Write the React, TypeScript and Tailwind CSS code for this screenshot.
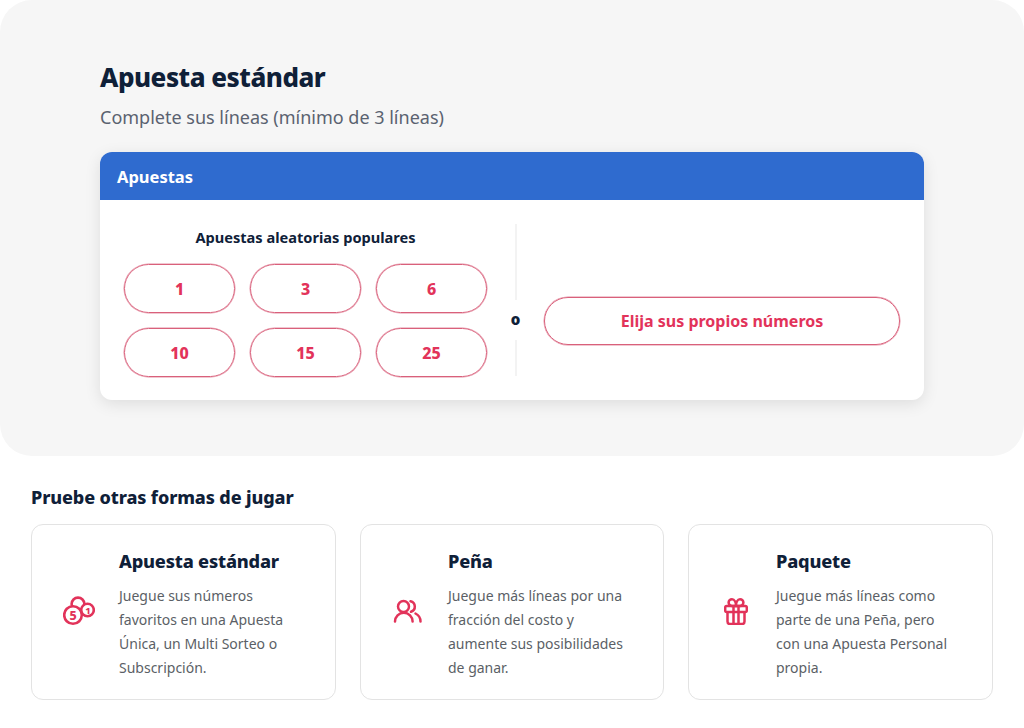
const font = { fontFamily: '"Noto Sans", sans-serif' };

function BallsIcon() {
  return (
    <svg width="32" height="32" viewBox="0 0 32 32" fill="none" stroke="#e2335a" strokeWidth="2.6">
      <circle cx="15" cy="9" r="6.4" />
      <circle cx="24.5" cy="15" r="6.3" fill="#fff" />
      <circle cx="10" cy="20" r="8.8" fill="#fff" />
      <text x="10" y="24.5" fontSize="12.5" fontWeight="800" textAnchor="middle" fill="#e2335a" stroke="none">5</text>
      <text x="25" y="18.5" fontSize="9.5" fontWeight="800" textAnchor="middle" fill="#e2335a" stroke="none">1</text>
    </svg>
  );
}

function UsersIcon() {
  return (
    <svg width="30" height="24" viewBox="0 0 30 24" fill="none" stroke="#e2335a" strokeWidth="2.5" strokeLinecap="round">
      <circle cx="10.5" cy="7.5" r="5.5" />
      <path d="M2 22.5a8.8 8.8 0 0 1 17.6 0" />
      <path d="M17.5 2.2a5.5 5.5 0 0 1 .5 10.6" />
      <path d="M22.5 14.5c3 1.5 5 4.5 5 8" />
    </svg>
  );
}

function GiftIcon() {
  return (
    <svg width="24" height="28" viewBox="0 0 24 28" fill="none" stroke="#e2335a" strokeWidth="2.5" strokeLinejoin="round">
      <rect x="1.2" y="9" width="21.6" height="6" rx="1.5" />
      <path d="M3.5 15v9.5A2.5 2.5 0 0 0 6 27h12a2.5 2.5 0 0 0 2.5-2.5V15" />
      <path d="M9.5 9v18M14.5 9v18" />
      <path d="M12 9H8a3.4 3.4 0 1 1 0-6.8C10.5 2.2 12 5.5 12 9Z" />
      <path d="M12 9h4a3.4 3.4 0 1 0 0-6.8C13.5 2.2 12 5.5 12 9Z" />
    </svg>
  );
}

const picks = ["1", "3", "6", "10", "15", "25"];

const ways = [
  {
    title: "Apuesta estándar",
    text: ["Juegue sus números", "favoritos en una Apuesta", "Única, un Multi Sorteo o", "Subscripción."],
    icon: <BallsIcon />,
    width: "w-[305px]",
  },
  {
    title: "Peña",
    text: ["Juegue más líneas por una", "fracción del costo y", "aumente sus posibilidades", "de ganar."],
    icon: <UsersIcon />,
    width: "w-[304px]",
  },
  {
    title: "Paquete",
    text: ["Juegue más líneas como", "parte de una Peña, pero", "con una Apuesta Personal", "propia."],
    icon: <GiftIcon />,
    width: "w-[305px]",
  },
];

export default function App() {
  return (
    <div className="w-[1024px] h-[728px] bg-white overflow-hidden" style={font}>
      <section className="h-[456px] bg-[#f6f6f6] rounded-[32px] px-[100px] pt-[59px]">
        <h1 className="text-[26px] leading-[36px] font-extrabold tracking-[-0.5px] text-[#0f2038]">Apuesta estándar</h1>
        <p className="mt-[9px] text-[18px] leading-[26px] text-[#5a6270]">Complete sus líneas (mínimo de 3 líneas)</p>

        <div className="mt-[22px] h-[248px] bg-white rounded-[12px] shadow-[0_4px_16px_rgba(0,0,0,0.1)] overflow-hidden">
          <div className="h-[48px] bg-[#2f6bcf] px-[17px] pt-[2px] flex items-center">
            <span className="text-[16.5px] font-bold text-white">Apuestas</span>
          </div>
          <div className="flex pl-[24px] pr-[24px]">
            <div className="w-[363px] pt-[24px]">
              <h3 className="h-[26px] text-center text-[14.6px] leading-[26px] font-bold text-[#0f2038]">Apuestas aleatorias populares</h3>
              <div className="mt-[14px] grid grid-cols-3 gap-x-[15px] gap-y-[15px]">
                {picks.map(n => (
                  <button key={n} className="h-[49px] rounded-full border border-[#d9607b] shadow-[0_0_0_0.5px_#e48fa3] text-[16px] font-extrabold text-[#e2335a]">
                    {n}
                  </button>
                ))}
              </div>
            </div>
            <div className="w-[57px] pt-[24px] h-[176px] flex flex-col items-center">
              <div className="w-[2px] h-[76px] bg-[#f3f3f3] ml-[1px]" />
              <div className="h-[40px] pb-[2px] flex items-center text-[15px] font-black text-[#0f2038]">o</div>
              <div className="w-[2px] h-[36px] bg-[#f3f3f3] ml-[1px]" />
            </div>
            <div className="flex-1 pt-[97px]">
              <button className="w-full h-[48px] rounded-full border border-[#d9607b] shadow-[0_0_0_0.5px_#e48fa3] text-[16px] font-bold text-[#e2335a]">
                Elija sus propios números
              </button>
            </div>
          </div>
        </div>
      </section>

      <section className="px-[31px] pt-[28px]">
        <h2 className="text-[18px] leading-[26px] font-extrabold tracking-[-0.12px] text-[#0f2038]">Pruebe otras formas de jugar</h2>
        <div className="mt-[14px] flex gap-[24px]">
          {ways.map(w => (
            <div key={w.title} className={`${w.width} h-[176px] border border-[#e3e3e3] rounded-[12px] flex`}>
              <div className="w-[87px] shrink-0 flex items-center justify-center pl-[7px] pb-[2px]">{w.icon}</div>
              <div className="pt-[21px]">
                <h3 className="text-[18.2px] leading-[30px] font-extrabold tracking-[-0.2px] text-[#0f2038]">{w.title}</h3>
                <p className="mt-[8px] text-[14px] leading-[24px] text-[#5b5f66]">
                  {w.text.map(line => (
                    <span key={line} className="block whitespace-nowrap">{line}</span>
                  ))}
                </p>
              </div>
            </div>
          ))}
        </div>
      </section>
    </div>
  );
}
